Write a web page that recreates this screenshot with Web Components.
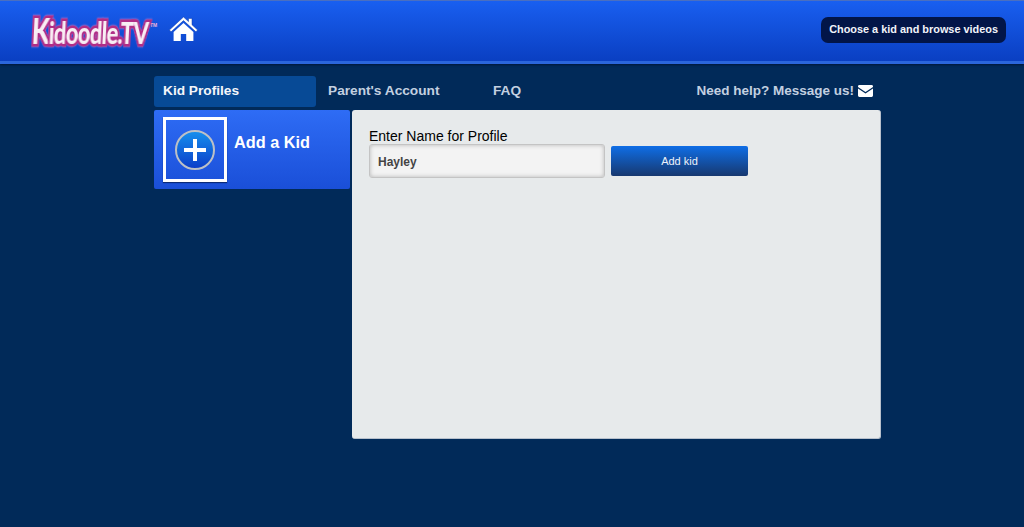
<!DOCTYPE html>
<html>
<head>
<meta charset="utf-8">
<title>Kidoodle.TV</title>
<style>
  html, body { margin: 0; height: 100%; background: #012a59; }
  body { font-family: "Liberation Sans", Arial, sans-serif; overflow: hidden; }
</style>
</head>
<body>
<kid-header></kid-header>
<kid-page>
  <kid-nav slot="nav"></kid-nav>
  <kid-add slot="side"></kid-add>
  <kid-form slot="main"></kid-form>
</kid-page>

<script>
class KidHeader extends HTMLElement {
  connectedCallback() {
    this.attachShadow({ mode: "open" });
    this.shadowRoot.innerHTML = `
      <style>
        :host {
          display: flex;
          align-items: center;
          justify-content: space-between;
          box-sizing: border-box;
          height: 64px;
          padding: 0 18px 3px 32px;
          background: linear-gradient(#195ff0, #0a3fc2);
          border-top: 1px solid #4a6fc0;
          border-bottom: 3px solid #2b66dc;
          box-shadow: 0 1px 2px #00173a;
        }
        .left { display: flex; align-items: center; }
        .box { width: 118px; height: 40px; }
        .logo {
          font-family: "Lato", sans-serif;
          font-weight: 900;
          font-size: 31px;
          letter-spacing: -1px;
          line-height: 40px;
          color: #f8eef4;
          -webkit-text-stroke: 5px #b02c86;
          paint-order: stroke fill;
          filter: drop-shadow(0 0 1px #ea80c4);
          transform: scaleX(.71) skewX(-4deg);
          transform-origin: left center;
          white-space: nowrap;
        }
        .logo span { font-size: 36px; }
        .tm {
          font-size: 5px;
          font-weight: 700;
          color: #eeb2d8;
          margin: -9px 0 0 0;
        }
        svg { display: block; margin: -1px 0 0 12px; }
        .hint {
          background: #021548;
          color: #f2f4fa;
          font-size: 10.9px;
          font-weight: 700;
          line-height: 25px;
          height: 26px;
          padding: 0 8px;
          border-radius: 7px;
        }
      </style>
      <div class="left">
        <div class="box"><div class="logo"><span>K</span>idoodle.TV</div></div>
        <div class="tm">TM</div>
        <svg width="29" height="26" viewBox="0 0 29 26">
          <path fill="#fff" stroke="#0b3aa8" stroke-width=".5" d="M14.5 1 L19.5 5.6 V2.4 H23 V8.8 L28.6 14 L26.9 15.8 L14.5 4.6 L2.1 15.8 L.4 14 Z"/>
          <path fill="#fff" d="M14.5 7 L24.4 15.9 V25 H17.2 V18 H11.8 V25 H4.6 V15.9 Z"/>
        </svg>
      </div>
      <div class="hint">Choose a kid and browse videos</div>
    `;
  }
}

class KidPage extends HTMLElement {
  connectedCallback() {
    this.attachShadow({ mode: "open" });
    this.shadowRoot.innerHTML = `
      <style>
        :host {
          display: grid;
          grid-template-columns: 196px 529px;
          grid-template-rows: 31px 329px;
          column-gap: 2px;
          row-gap: 3px;
          width: 727px;
          margin: 12px 0 0 154px;
        }
        .nav { grid-column: 1 / 3; }
      </style>
      <div class="nav"><slot name="nav"></slot></div>
      <div><slot name="side"></slot></div>
      <div><slot name="main"></slot></div>
    `;
  }
}

class KidNav extends HTMLElement {
  connectedCallback() {
    this.attachShadow({ mode: "open" });
    this.shadowRoot.innerHTML = `
      <style>
        :host {
          display: flex;
          align-items: flex-start;
          height: 31px;
          font-size: 13.7px;
          font-weight: 700;
          color: #c3d0e0;
        }
        .tab { line-height: 29px; height: 31px; }
        .active {
          box-sizing: border-box;
          width: 162px;
          padding-left: 9px;
          margin-right: 12px;
          background: #074a96;
          border-radius: 3px;
          color: #f4f6fa;
        }
        .account { width: 165px; }
        .help {
          margin-left: auto;
          display: flex;
          align-items: center;
          gap: 4px;
          margin-right: 8px;
          font-size: 13.5px;
          height: 29px;
        }
      </style>
      <div class="tab active">Kid Profiles</div>
      <div class="tab account">Parent's Account</div>
      <div class="tab">FAQ</div>
      <div class="tab help">Need help? Message us!
        <svg width="15" height="12" viewBox="0 0 15 12">
          <path fill="#fff" d="M1.4 0 H13.6 A1.4 1.4 0 0 1 15 1.4 V2 L7.5 7 L0 2 V1.4 A1.4 1.4 0 0 1 1.4 0 Z"/>
          <path fill="#fff" d="M0 3.6 L7.5 8.6 L15 3.6 V10.6 A1.4 1.4 0 0 1 13.6 12 H1.4 A1.4 1.4 0 0 1 0 10.6 Z"/>
        </svg>
      </div>
    `;
  }
}

class KidAdd extends HTMLElement {
  connectedCallback() {
    this.attachShadow({ mode: "open" });
    this.shadowRoot.innerHTML = `
      <style>
        :host {
          display: flex;
          box-sizing: border-box;
          height: 79px;
          padding: 7px 0 0 9px;
          background: linear-gradient(#2e6cf5, #1a4fd8);
          border-radius: 2px;
          color: #fff;
        }
        .tile {
          box-sizing: border-box;
          display: flex;
          align-items: center;
          justify-content: center;
          width: 64px;
          height: 65px;
          border: 3px solid #fff;
          box-shadow: 0 1px 1px #0b2a78;
        }
        .label {
          margin: 15px 0 0 7px;
          font-size: 16.3px;
          font-weight: 700;
          line-height: 20px;
        }
      </style>
      <div class="tile">
        <svg width="42" height="42" viewBox="0 0 42 42">
          <defs>
            <linearGradient id="ball" x1="0" y1="0" x2="0" y2="1">
              <stop offset="0" stop-color="#1590ee"/>
              <stop offset="1" stop-color="#0c3cc8"/>
            </linearGradient>
          </defs>
          <circle cx="21" cy="21" r="19" fill="url(#ball)" stroke="#bcc0c6" stroke-width="2"/>
          <path fill="#fff" d="M19 10 H23 V19 H32 V23 H23 V32 H19 V23 H10 V19 H19 Z"/>
        </svg>
      </div>
      <div class="label">Add a Kid</div>
    `;
  }
}

class KidForm extends HTMLElement {
  connectedCallback() {
    this.attachShadow({ mode: "open" });
    this.shadowRoot.innerHTML = `
      <style>
        :host {
          display: block;
          box-sizing: border-box;
          height: 329px;
          padding: 18px 0 0 17px;
          background: #e7eaeb;
          border-radius: 3px;
          border-right: 1px solid #b7c0cc;
          border-bottom: 1px solid #b7c0cc;
          color: #000;
        }
        label { display: block; font-size: 14px; line-height: 16px; }
        .row { display: flex; align-items: center; gap: 6px; }
        input {
          box-sizing: border-box;
          width: 236px;
          height: 34px;
          padding: 1px 8px 0;
          font: 700 12px "Liberation Sans", Arial, sans-serif;
          color: #444;
          background: #f3f3f3;
          border: 1px solid #c4c4c4;
          border-radius: 3px;
          box-shadow: inset 0 0 4px #b5b5b5;
          outline: none;
        }
        button {
          width: 137px;
          height: 30px;
          padding: 0;
          font: 11px "Liberation Sans", Arial, sans-serif;
          color: #eef2fa;
          background: linear-gradient(#0f6ee6, #17386f);
          border: none;
          border-radius: 2px;
        }
      </style>
      <label for="name">Enter Name for Profile</label>
      <div class="row">
        <input id="name" type="text" value="Hayley">
        <button type="button">Add kid</button>
      </div>
    `;
  }
}

customElements.define("kid-header", KidHeader);
customElements.define("kid-page", KidPage);
customElements.define("kid-nav", KidNav);
customElements.define("kid-add", KidAdd);
customElements.define("kid-form", KidForm);
</script>
</body>
</html>
